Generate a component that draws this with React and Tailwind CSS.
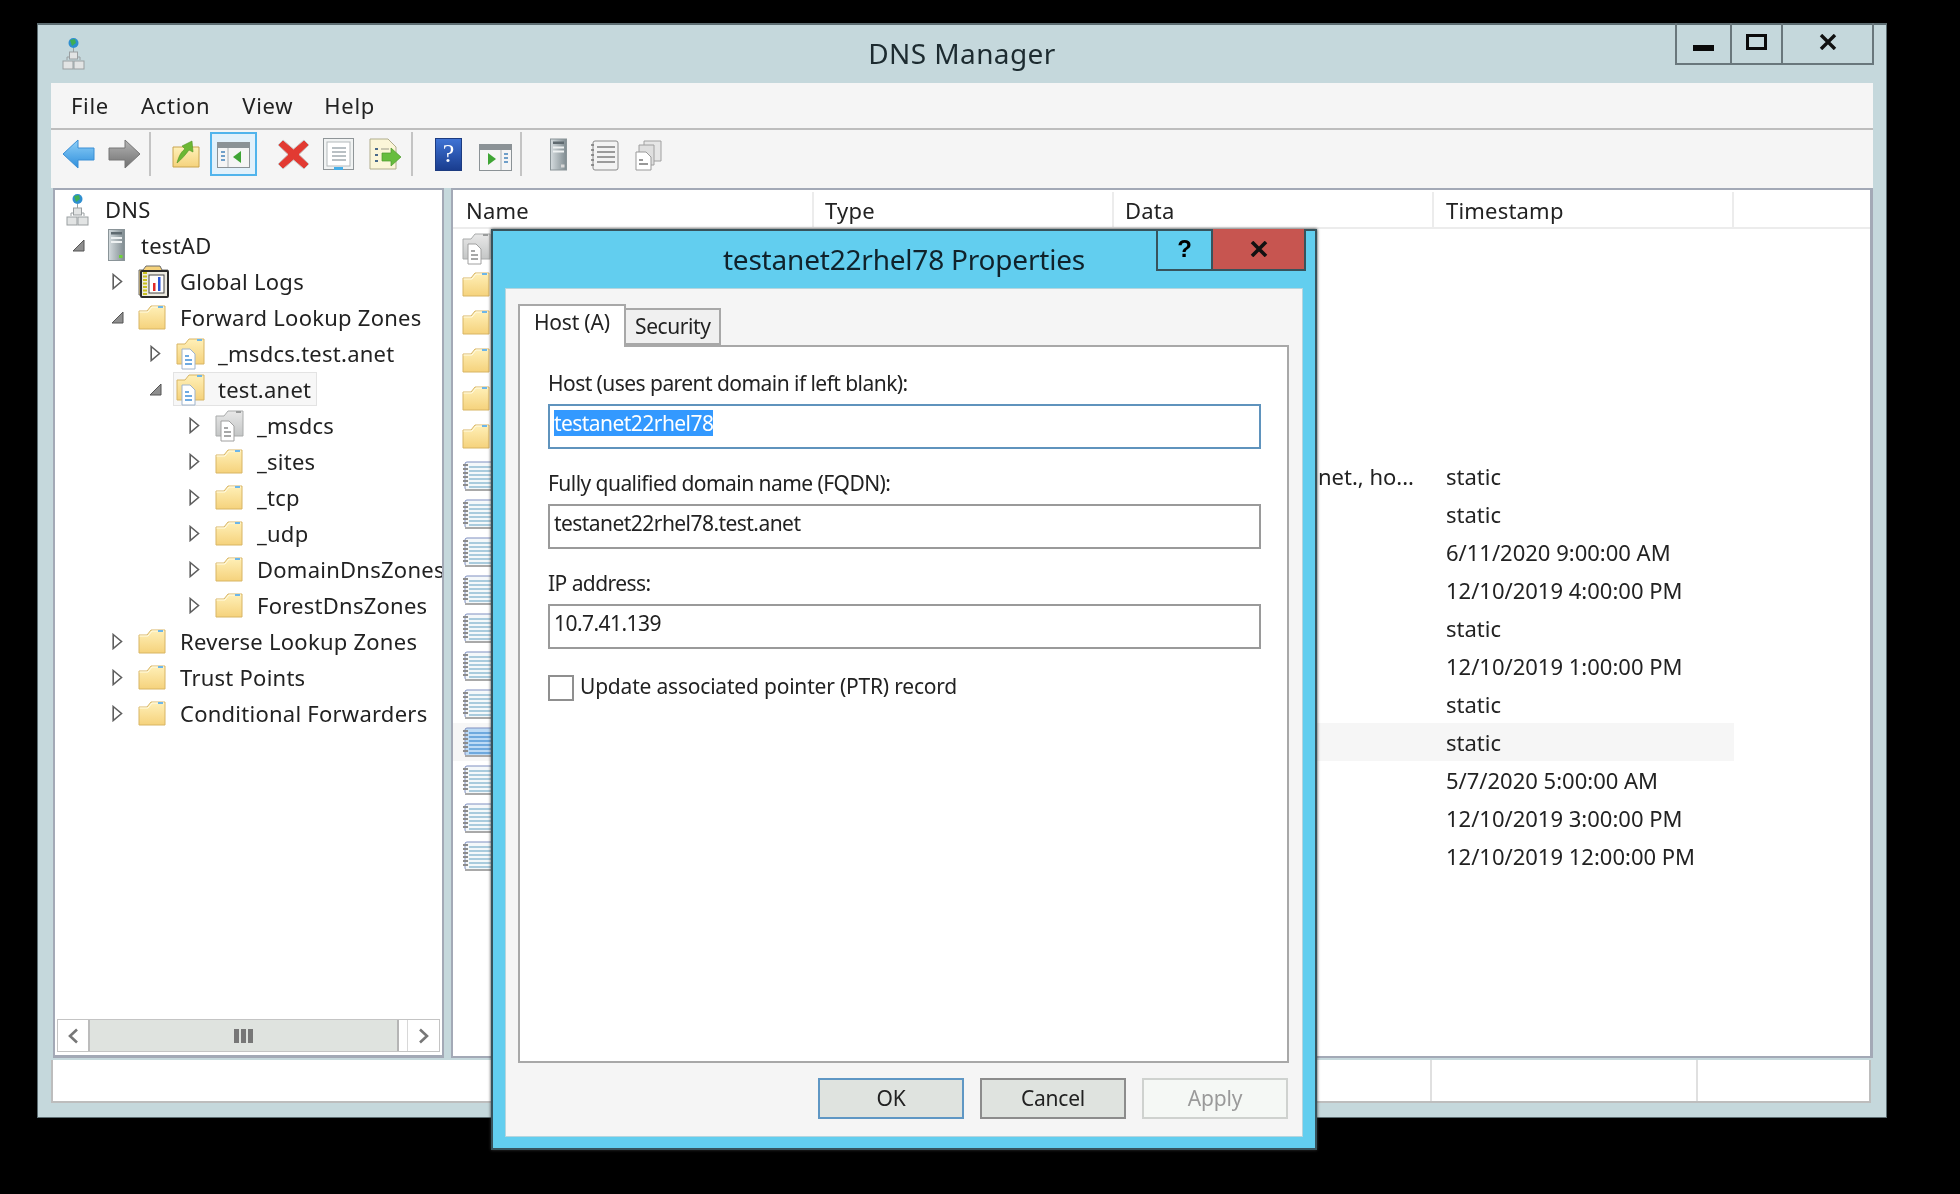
import React from "react";

const FONT = "font-['Noto_Sans','Open_Sans',sans-serif]";

function Grads() {
  return (
    <svg width="0" height="0" className="absolute">
      <defs>
        <linearGradient id="fold" x1="0" y1="0" x2="0" y2="1">
          <stop offset="0" stopColor="#fff0b8" />
          <stop offset="1" stopColor="#f5d27c" />
        </linearGradient>
        <linearGradient id="foldg" x1="0" y1="0" x2="0" y2="1">
          <stop offset="0" stopColor="#e8e8e8" />
          <stop offset="1" stopColor="#c4c6c6" />
        </linearGradient>
        <linearGradient id="srv" x1="0" y1="0" x2="1" y2="0">
          <stop offset="0" stopColor="#d5dcdf" />
          <stop offset="1" stopColor="#7f8b90" />
        </linearGradient>
        <linearGradient id="back" x1="0" y1="0" x2="0" y2="1">
          <stop offset="0" stopColor="#8fd0f8" />
          <stop offset="1" stopColor="#2f8fdc" />
        </linearGradient>
        <linearGradient id="fwd" x1="0" y1="0" x2="0" y2="1">
          <stop offset="0" stopColor="#b5b5b5" />
          <stop offset="1" stopColor="#6f6f6f" />
        </linearGradient>
      </defs>
    </svg>
  );
}

function Folder() {
  return (
    <svg width="28" height="26" viewBox="0 0 28 26">
      <path d="M1 7 H9 L13 2 H27 V25 H1 Z" fill="url(#fold)" stroke="#d8b565" strokeWidth="1" />
      <path d="M1.5 8 H10 L14 3 H26" fill="none" stroke="#fffbe6" strokeWidth="1" />
      <rect x="20" y="2" width="5" height="2" fill="#6db6e8" />
    </svg>
  );
}

function DocFolder({ gray }) {
  const fill = gray ? "url(#foldg)" : "url(#fold)";
  const stroke = gray ? "#a9abab" : "#d8b565";
  const line = gray ? "#8a8c8c" : "#3f8fd8";
  return (
    <svg width="30" height="33" viewBox="0 0 30 33">
      <path d="M1 7 H9 L13 2 H28 V27 H1 Z" fill={fill} stroke={stroke} />
      <rect x="21" y="2" width="5" height="2" fill={gray ? "#9a9c9c" : "#6db6e8"} />
      <path d="M6 12 H14 L19 17 V32 H6 Z" fill="#fff" stroke={gray ? "#a0a0a0" : "#9fb4cc"} />
      <path d="M9 19 H13 M9 23 H16 M9 27 H16" stroke={line} strokeWidth="1.6" />
    </svg>
  );
}

function DnsIcon() {
  return (
    <svg width="23" height="33" viewBox="0 0 23 33">
      <circle cx="11.5" cy="6" r="5" fill="#2f8fd0" />
      <path d="M8 3 L13 2 L14 6 L10 9 Z" fill="#3fae55" />
      <path d="M11.5 11 V15 M5 23 V20 H18 V23" stroke="#9aa0a2" fill="none" />
      <rect x="7.5" y="15" width="8" height="7" fill="#e2e4e4" stroke="#9a9fa1" />
      <rect x="1" y="24" width="10" height="8" fill="#e2e4e4" stroke="#9a9fa1" />
      <rect x="12" y="24" width="10" height="8" fill="#e2e4e4" stroke="#9a9fa1" />
    </svg>
  );
}

function ServerIcon({ w = 17, h = 32, led = "#6fd13a" }) {
  return (
    <svg width={w} height={h} viewBox="0 0 17 32">
      <rect x="0.5" y="0.5" width="16" height="31" fill="url(#srv)" stroke="#8a9498" />
      <rect x="3" y="3" width="11" height="2.5" fill="#5f6a70" />
      <rect x="3" y="8" width="11" height="2" fill="#eef1f2" />
      <rect x="3" y="12" width="11" height="2" fill="#eef1f2" />
      <rect x="11" y="26" width="3.5" height="3" fill={led} />
    </svg>
  );
}

function LogIcon() {
  return (
    <svg width="32" height="33" viewBox="0 0 32 33">
      <path d="M1 5 H5 L8 1 H22 L24 5 H30 V30 H1 Z" fill="#f5d27c" stroke="#6b6b6b" />
      <rect x="3" y="6" width="27" height="26" rx="1" fill="#eceae0" stroke="#2a2a2a" strokeWidth="2" />
      <path d="M7 7 V31" stroke="#c9c020" strokeWidth="4" strokeDasharray="2 1.5" />
      <rect x="11" y="10" width="15" height="18" fill="#fff" stroke="#444" />
      <rect x="15" y="18" width="2.5" height="8" fill="#e02a2a" />
      <rect x="20" y="12" width="2.5" height="14" fill="#2a55d8" />
    </svg>
  );
}

function Notebook({ active }) {
  return (
    <svg width="34" height="30" viewBox="0 0 34 30" className="shrink-0">
      <rect x="3" y="1" width="30" height="28" rx="2" fill={active ? "#bcdaf5" : "#f4f8fa"} stroke="#7f8fc0" />
      <path d="M3 29 H33" stroke="#a9a9a9" strokeWidth="2" />
      {[6, 10, 14, 18, 22, 26].map((y) => (
        <path key={y} d={`M7 ${y} H33`} stroke={active ? "#6ea9de" : "#a9cbdd"} strokeWidth="2" />
      ))}
      {[4, 8, 12, 16, 20, 24].map((y) => (
        <path key={y} d={`M1 ${y} H6`} stroke="#8c8c8c" strokeWidth="2" />
      ))}
    </svg>
  );
}

function Arrow({ open }) {
  if (open) {
    return (
      <svg width="13" height="13" viewBox="0 0 13 13">
        <path d="M12 1 V12 H1 Z" fill="#8f8f8f" stroke="#555" />
      </svg>
    );
  }
  return (
    <svg width="11" height="17" viewBox="0 0 11 17">
      <path d="M1.2 1.5 L9.5 8.5 L1.2 15.5 Z" fill="#fff" stroke="#5f5f5f" strokeWidth="1.6" />
    </svg>
  );
}

const tree = [
  { label: "DNS", icon: <DnsIcon />, pad: "pl-[8px]", noArrow: true, slot: "w-[39px]" },
  { label: "testAD", icon: <ServerIcon />, pad: "pl-[3px]", open: true, center: true },
  { label: "Global Logs", icon: <LogIcon />, pad: "pl-[42px]" },
  { label: "Forward Lookup Zones", icon: <Folder />, pad: "pl-[42px]", open: true },
  { label: "_msdcs.test.anet", icon: <DocFolder />, pad: "pl-[80px]" },
  { label: "test.anet", icon: <DocFolder />, pad: "pl-[80px]", open: true, selected: true },
  { label: "_msdcs", icon: <DocFolder gray />, pad: "pl-[119px]" },
  { label: "_sites", icon: <Folder />, pad: "pl-[119px]" },
  { label: "_tcp", icon: <Folder />, pad: "pl-[119px]" },
  { label: "_udp", icon: <Folder />, pad: "pl-[119px]" },
  { label: "DomainDnsZones", icon: <Folder />, pad: "pl-[119px]" },
  { label: "ForestDnsZones", icon: <Folder />, pad: "pl-[119px]" },
  { label: "Reverse Lookup Zones", icon: <Folder />, pad: "pl-[42px]" },
  { label: "Trust Points", icon: <Folder />, pad: "pl-[42px]" },
  { label: "Conditional Forwarders", icon: <Folder />, pad: "pl-[42px]" },
];

const rows = [
  { kind: "gray" },
  { kind: "folder" },
  { kind: "folder" },
  { kind: "folder" },
  { kind: "folder" },
  { kind: "folder" },
  { data: "test.anet., ho...", time: "static" },
  { time: "static" },
  { time: "6/11/2020 9:00:00 AM" },
  { time: "12/10/2019 4:00:00 PM" },
  { time: "static" },
  { time: "12/10/2019 1:00:00 PM" },
  { time: "static" },
  { time: "static", active: true },
  { time: "5/7/2020 5:00:00 AM" },
  { time: "12/10/2019 3:00:00 PM" },
  { time: "12/10/2019 12:00:00 PM" },
];

function TreeRow({ item }) {
  return (
    <div className={`flex items-center h-[36px] shrink-0 whitespace-nowrap ${item.pad}`}>
      {!item.noArrow && (
        <div className="w-[38px] h-full flex items-center justify-center pl-[3px] shrink-0">
          <Arrow open={item.open} />
        </div>
      )}
      <div
        className={`flex items-center h-[34px] pl-[2px] pr-[5px] border ${
          item.selected ? "bg-[#f7f7f7] border-[#e3e3e3]" : "border-transparent"
        }`}
      >
        <div className={`flex shrink-0 ${item.slot || "w-[42px]"} ${item.center ? "justify-center pr-[8px]" : ""}`}>{item.icon}</div>
        <span className="text-[22px] leading-[30px] text-[#222] tracking-[0.25px]">{item.label}</span>
      </div>
    </div>
  );
}

function Scrollbar() {
  return (
    <div className="flex h-[33px] mx-[2px] mb-[3px] shrink-0 border border-[#c4c4c4] bg-white">
      <div className="w-[32px] flex items-center justify-center border-r-2 border-[#bcbcbc]">
        <svg width="12" height="16" viewBox="0 0 12 16">
          <path d="M10 1.5 L3 8 L10 14.5" fill="none" stroke="#777" strokeWidth="2.6" />
        </svg>
      </div>
      <div className="w-[309px] bg-[#dfe3df] border-r-2 border-[#b5b5b5] flex items-center justify-center gap-[2px]">
        <div className="w-[5px] h-[14px] bg-[#777]" />
        <div className="w-[5px] h-[14px] bg-[#777]" />
        <div className="w-[5px] h-[14px] bg-[#777]" />
      </div>
      <div className="flex-1 flex justify-end">
        <div className="w-[32px] flex items-center justify-center border-l border-[#d8d8d8]">
          <svg width="12" height="16" viewBox="0 0 12 16">
            <path d="M2 1.5 L9 8 L2 14.5" fill="none" stroke="#777" strokeWidth="2.6" />
          </svg>
        </div>
      </div>
    </div>
  );
}

function Toolbar() {
  return (
    <div className="flex items-center h-[58px] pb-[10px] bg-[#f5f5f5] shrink-0">
      <svg width="33" height="30" viewBox="0 0 33 30" className="ml-[11px]">
        <path d="M1 15 L16 1 V9 H32 V21 H16 V29 Z" fill="url(#back)" stroke="#3b8fd5" />
      </svg>
      <svg width="33" height="30" viewBox="0 0 33 30" className="ml-[13px]">
        <path d="M32 15 L17 1 V9 H1 V21 H17 V29 Z" fill="url(#fwd)" stroke="#777" />
      </svg>
      <div className="w-[2px] h-[44px] bg-[#c4c4c4] ml-[8px]" />
      <svg width="29" height="30" viewBox="0 0 29 30" className="ml-[21px]">
        <path d="M1 8 H27 V28 H1 Z" fill="url(#fold)" stroke="#c9a44f" />
        <path d="M5 24 C7 16 10 12 13 10 L10 7 L20 2 L21 13 L17 11 C14 15 10 20 5 24 Z" fill="#6cb733" stroke="#4f9427" strokeWidth="0.6" />
      </svg>
      <div className="w-[47px] h-[44px] ml-[9px] border-2 border-[#51b4ec] bg-[#e2f1fb] flex items-center justify-center">
        <svg width="33" height="26" viewBox="0 0 33 26" className="mt-[2px]">
          <rect x="0.5" y="0.5" width="32" height="25" fill="#f5f5f5" stroke="#8b9296" />
          <rect x="1" y="1" width="31" height="5" fill="#8b9296" />
          <path d="M11 6 V25" stroke="#aab0b3" />
          <path d="M4 10 H8 M4 14 H8 M4 18 H8" stroke="#6f9fc9" strokeWidth="2" />
          <path d="M24 9 L16 15 L24 21 Z" fill="#3fa535" />
        </svg>
      </div>
      <svg width="33" height="31" viewBox="0 0 33 31" className="ml-[20px]">
        <path d="M6 1 L16.5 10 L27 1 L32 6 L22 15.5 L32 25 L27 30 L16.5 21 L6 30 L1 25 L11 15.5 L1 6 Z" fill="#e23a32" stroke="#c9c9c9" />
      </svg>
      <svg width="31" height="33" viewBox="0 0 31 33" className="ml-[13px]">
        <rect x="0.5" y="0.5" width="30" height="31" fill="#f1f3f3" stroke="#8f9598" />
        <rect x="4" y="4" width="23" height="24" fill="#fff" stroke="#b4b9bb" />
        <path d="M9 10 H23 M9 14 H23 M9 18 H23 M9 22 H23" stroke="#a3acb1" strokeWidth="1.4" />
        <rect x="11" y="29" width="9" height="3" fill="#45aee8" />
      </svg>
      <svg width="33" height="33" viewBox="0 0 33 33" className="ml-[15px]">
        <path d="M1 1 H19 L27 9 V31 H1 Z" fill="#fbf6d8" stroke="#b0ad8c" />
        <path d="M6 11 H9 M6 17 H9 M6 23 H9" stroke="#4a6a8a" strokeWidth="2" />
        <path d="M12 11 H20" stroke="#9b9b8a" />
        <path d="M13 15 H22 V10 L32 19 L22 28 V23 H13 Z" fill="#67bd3f" stroke="#4a9a2b" strokeWidth="0.7" />
      </svg>
      <div className="w-[2px] h-[44px] bg-[#c4c4c4] ml-[9px]" />
      <div className="w-[27px] h-[33px] ml-[22px] bg-gradient-to-b from-[#3f73d4] to-[#1a3d8f] border border-[#1c3b80] flex items-center justify-center text-white text-[26px] leading-none font-['Liberation_Serif',serif]">
        ?
      </div>
      <svg width="33" height="27" viewBox="0 0 33 27" className="ml-[17px] mt-[6px]">
        <rect x="0.5" y="0.5" width="32" height="26" fill="#f5f5f5" stroke="#8b9296" />
        <rect x="1" y="1" width="31" height="5" fill="#8b9296" />
        <path d="M22 6 V26" stroke="#aab0b3" />
        <path d="M25 10 H29 M25 14 H29 M25 18 H29" stroke="#6f9fc9" strokeWidth="2" />
        <path d="M9 9 L17 15 L9 21 Z" fill="#3fa535" />
      </svg>
      <div className="w-[2px] h-[44px] bg-[#c4c4c4] ml-[8px]" />
      <div className="ml-[28px] flex">
        <ServerIcon w={17} h={33} led="#d8d8d8" />
      </div>
      <svg width="29" height="31" viewBox="0 0 29 31" className="ml-[23px] mt-[3px]">
        <rect x="3" y="1" width="25" height="29" rx="2" fill="#f3f3f3" stroke="#8b8b8b" />
        <path d="M7 7 H25 M7 12 H25 M7 17 H25 M7 22 H25" stroke="#7f7f7f" strokeWidth="1.6" />
        <path d="M1 5 H4 M1 10 H4 M1 15 H4 M1 20 H4 M1 25 H4" stroke="#777" strokeWidth="1.5" />
      </svg>
      <svg width="29" height="31" viewBox="0 0 29 31" className="ml-[15px] mt-[3px]">
        <path d="M10 1 H27 V21 H10 Z" fill="#e6e6e6" stroke="#a0a0a0" />
        <path d="M5 5 H20 V25 H5 Z" fill="#dfdfdf" stroke="#a0a0a0" />
        <path d="M2 12 H12 L17 17 V30 H2 Z" fill="#fff" stroke="#999" />
        <path d="M5 20 H9 M5 24 H14" stroke="#777" strokeWidth="1.4" />
      </svg>
    </div>
  );
}

function ListPane() {
  return (
    <div className="flex-1 border-2 border-[#a3a9b6] border-r-[3px] bg-white flex flex-col overflow-hidden">
      <div className="flex h-[37px] mt-[2px] pl-[2px] shrink-0 border-b-2 border-[#ececec] text-[22px] leading-[37px] tracking-[0.2px] text-[#222] whitespace-nowrap">
        <div className="w-[359px] pl-[11px] border-r-2 border-[#ececec]">Name</div>
        <div className="w-[300px] pl-[11px] border-r-2 border-[#ececec]">Type</div>
        <div className="w-[320px] pl-[11px] border-r-2 border-[#ececec]">Data</div>
        <div className="w-[300px] pl-[12px] border-r-2 border-[#ececec]">Timestamp</div>
      </div>
      {rows.map((r, i) => (
        <div key={i} className={`flex items-center h-[38px] shrink-0 w-[1281px] whitespace-nowrap text-[22px] text-[#222] ${r.active ? "bg-[#f6f6f6]" : ""}`}>
          <div className="w-[661px] pl-[9px] flex items-center">
            {r.kind === "gray" && <DocFolder gray />}
            {r.kind === "folder" && (
              <div className="flex -mt-[4px]">
                <Folder />
              </div>
            )}
            {!r.kind && <Notebook active={r.active} />}
          </div>
          <div className="w-[320px] pr-[20px] text-right">{r.data}</div>
          <div className="pl-[12px]">{r.time}</div>
        </div>
      ))}
    </div>
  );
}

function Field({ label, value, selected, focus, mt }) {
  return (
    <div className={mt}>
      <div className="h-[35px] text-[21px] leading-[29px] text-[#222] tracking-[-0.55px]">{label}</div>
      <div className={`h-[45px] border-2 bg-white pl-[4px] flex items-start pt-[4px] text-[21px] leading-[26px] tracking-[-0.55px] text-[#222] ${focus ? "border-[#5f93bd]" : "border-[#9a9a9a]"}`}>
        {selected ? <span className="bg-[#3399ff] text-white">{value}</span> : value}
      </div>
    </div>
  );
}

function Dialog() {
  return (
    <div className="absolute left-[491px] top-[229px] w-[826px] h-[921px] bg-[#62ceef] border-2 border-[#37535c] flex flex-col shadow-[0_0_3px_#333]">
      <div className="relative h-[58px] shrink-0 flex items-center justify-center">
        <span className="text-[28px] text-[#10222b] tracking-[-0.2px] -mt-[3px]">testanet22rhel78 Properties</span>
        <div className="absolute right-[9px] -top-[2px] flex h-[42px] border-2 border-t-0 border-[#37535c]">
          <div className="w-[55px] flex items-center justify-center border-r-2 border-[#37535c] font-bold text-[24px] text-black font-['Liberation_Sans',sans-serif]">?</div>
          <div className="w-[91px] bg-[#c75550] flex items-center justify-center">
            <svg width="18" height="16" viewBox="0 0 18 16">
              <path d="M2 1 L16 15 M16 1 L2 15" stroke="#111" strokeWidth="3.6" />
            </svg>
          </div>
        </div>
      </div>
      <div className="flex-1 mx-[13px] mb-[12px] bg-[#f5f5f5] flex flex-col pl-[12px] pr-[13px] pt-[15px] shadow-[0_0_0_1px_#b5d5de]">
        <div className="flex h-[41px] shrink-0 relative z-10">
          <div className="w-[108px] h-[43px] bg-white border-2 border-b-0 border-[#a8a8a8] pl-[14px] text-[21px] leading-[32px] tracking-[-0.2px] text-[#222]">Host (A)</div>
          <div className="w-[95px] h-[37px] mt-[4px] bg-[#f0f0f0] border-2 border-l-0 border-[#a8a8a8] pl-[9px] text-[21px] leading-[32px] tracking-[-0.4px] text-[#222]">Security</div>
        </div>
        <div className="h-[718px] border-2 border-[#a8a8a8] bg-white pl-[28px] pr-[26px] pt-[22px] shrink-0">
          <Field label="Host (uses parent domain if left blank):" value="testanet22rhel78" selected focus />
          <Field label="Fully qualified domain name (FQDN):" value="testanet22rhel78.test.anet" mt="mt-[20px]" />
          <Field label="IP address:" value="10.7.41.139" mt="mt-[20px]" />
          <div className="flex items-center mt-[24px]">
            <div className="w-[26px] h-[26px] border-2 border-[#8f8f8f] bg-white" />
            <span className="ml-[6px] -mt-[2px] text-[21px] tracking-[-0.2px] text-[#222]">Update associated pointer (PTR) record</span>
          </div>
        </div>
        <div className="flex justify-end gap-[16px] mt-[15px] mr-[1px]">
          <div className="w-[146px] h-[41px] bg-[#dfe3df] border-2 border-[#5f97c4] flex items-center justify-center text-[21px] tracking-[-0.2px] text-[#222]">OK</div>
          <div className="w-[146px] h-[41px] bg-[#dfe3df] border-2 border-[#8c8c8c] flex items-center justify-center text-[21px] tracking-[-0.2px] text-[#222]">Cancel</div>
          <div className="w-[146px] h-[41px] bg-[#f5f8f5] border-2 border-[#cfd2cf] flex items-center justify-center text-[21px] tracking-[-0.2px] text-[#9a9a9a]">Apply</div>
        </div>
      </div>
    </div>
  );
}

export default function App() {
  return (
    <div className={`relative w-[1960px] h-[1194px] bg-black overflow-hidden pt-[23px] pl-[37px] blur-[0.4px] ${FONT}`}>
      <Grads />
      <div className="w-[1850px] h-[1095px] bg-[#c5d8dc] border-t-2 border-x border-b border-[#5d6d72] flex flex-col">
        <div className="relative h-[58px] shrink-0 flex items-center justify-center">
          <div className="absolute left-[24px] top-[12px]">
            <DnsIcon />
          </div>
          <span className="text-[28px] tracking-[0.4px] text-[#1d2b30] -mt-[3px]">DNS Manager</span>
          <div className="absolute right-[12px] -top-[2px] h-[42px] flex border-2 border-t-0 border-[#69777c]">
            <div className="w-[55px] border-r-2 border-[#69777c] flex items-center justify-center">
              <div className="w-[21px] h-[6px] bg-[#0a0a0a] mt-[9px]" />
            </div>
            <div className="w-[51px] border-r-2 border-[#69777c] flex items-center justify-center">
              <div className="w-[21px] h-[16px] border-[3px] border-[#0a0a0a] -mt-[3px]" />
            </div>
            <div className="flex-1 w-[89px] flex items-center justify-center">
              <svg width="18" height="16" viewBox="0 0 18 16" className="-mt-[3px]">
                <path d="M2 1 L16 15 M16 1 L2 15" stroke="#111" strokeWidth="3.4" />
              </svg>
            </div>
          </div>
        </div>
        <div className="mx-[13px] flex-1 flex flex-col min-h-0">
          <div className="flex items-center h-[47px] bg-[#f5f5f5] border-b-2 border-[#bdbdbd] shrink-0 text-[22px] text-[#222] tracking-[0.7px]">
            <span className="ml-[20px]">File</span>
            <span className="ml-[32px]">Action</span>
            <span className="ml-[32px]">View</span>
            <span className="ml-[31px]">Help</span>
          </div>
          <Toolbar />
          <div className="flex h-[870px] gap-[7px] pl-[2px] shrink-0">
            <div className="w-[391px] border-2 border-[#a3a9b6] border-b-[3px] bg-white flex flex-col shrink-0">
              <div className="flex-1 overflow-hidden flex flex-col pt-[1px]">
                {tree.map((t) => (
                  <TreeRow key={t.label} item={t} />
                ))}
              </div>
              <Scrollbar />
            </div>
            <ListPane />
          </div>
          <div className="flex h-[43px] mt-[2px] mr-[2px] bg-white border-2 border-t-0 border-[#bdbdbd] shrink-0">
            <div className="w-[1379px] border-r-2 border-[#e0e0e0]" />
            <div className="w-[266px] border-r-2 border-[#e0e0e0]" />
            <div className="flex-1" />
          </div>
        </div>
      </div>
      <Dialog />
    </div>
  );
}
